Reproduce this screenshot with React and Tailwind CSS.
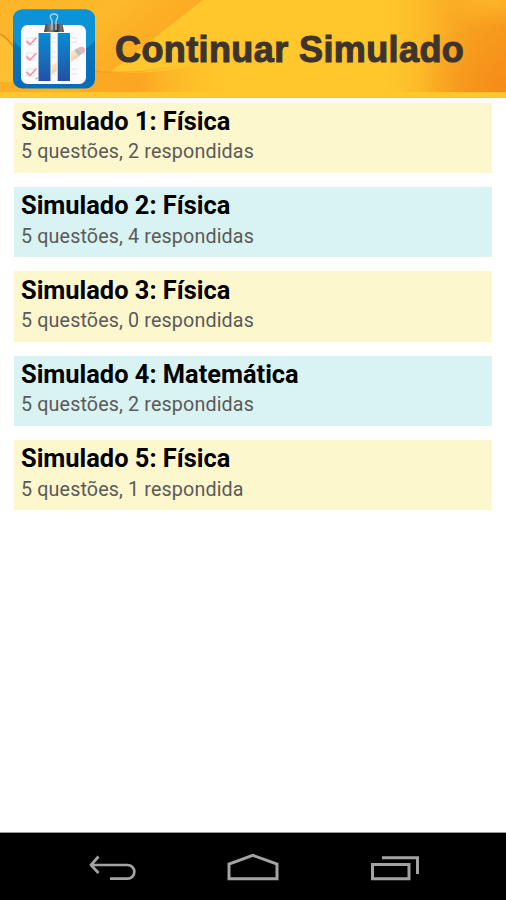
import React from 'react';

const simulados = [
  { id: 1, materia: 'Física', status: '5 questões, 2 respondidas' },
  { id: 2, materia: 'Física', status: '5 questões, 4 respondidas' },
  { id: 3, materia: 'Física', status: '5 questões, 0 respondidas' },
  { id: 4, materia: 'Matemática', status: '5 questões, 2 respondidas' },
  { id: 5, materia: 'Física', status: '5 questões, 1 respondida' },
];

function HeaderArt() {
  return (
    <svg className="absolute inset-0" width="506" height="98" viewBox="0 0 506 98">
      <defs>
        <linearGradient id="left" gradientUnits="userSpaceOnUse" x1="70" y1="-10" x2="150" y2="80">
          <stop offset="0" stopColor="#fdb62a" />
          <stop offset="0.35" stopColor="#fdb82b" />
          <stop offset="0.65" stopColor="#fcae25" />
          <stop offset="1" stopColor="#fbaa23" />
        </linearGradient>
        <linearGradient id="right" x1="0" y1="0" x2="1" y2="0">
          <stop offset="0" stopColor="#ffc72b" />
          <stop offset="0.25" stopColor="#fdbd29" />
          <stop offset="0.6" stopColor="#f8a722" />
          <stop offset="1" stopColor="#f69c1e" />
        </linearGradient>
        <linearGradient id="wave" gradientUnits="userSpaceOnUse" x1="60" y1="0" x2="240" y2="0">
          <stop offset="0" stopColor="#fba923" />
          <stop offset="0.45" stopColor="#fba723" />
          <stop offset="1" stopColor="#ffc72b" stopOpacity="0" />
        </linearGradient>
        <linearGradient id="line" gradientUnits="userSpaceOnUse" x1="90" y1="0" x2="200" y2="0">
          <stop offset="0" stopColor="#f3931b" stopOpacity="0.8" />
          <stop offset="1" stopColor="#f9a522" stopOpacity="0" />
        </linearGradient>
        <radialGradient id="corner" cx="1" cy="1" r="0.9">
          <stop offset="0" stopColor="#f58516" stopOpacity="0.75" />
          <stop offset="1" stopColor="#f58516" stopOpacity="0" />
        </radialGradient>
        <radialGradient id="glow" cx="0.85" cy="0" r="0.8">
          <stop offset="0" stopColor="#ffba2c" stopOpacity="0.8" />
          <stop offset="1" stopColor="#ffba2c" stopOpacity="0" />
        </radialGradient>
      </defs>
      <rect width="506" height="98" fill="#ffc72b" />
      <path d="M0 0H203L100 80L84 92H0Z" fill="url(#left)" />
      <path d="M0 34Q14 44 30 68L44 86Q20 82 0 82Z" fill="#ffbf33" />
      <path d="M0 34Q8 38 16 50" fill="none" stroke="#d98716" strokeWidth="1.8" opacity="0.75" />
      <path d="M0 82Q24 81 50 92H0Z" fill="#fbae27" />
      <path d="M90 70Q125 76 170 70Q205 64 248 50V92H84L90 87Z" fill="url(#wave)" />
      <path d="M90 71Q135 76 200 62" fill="none" stroke="url(#line)" strokeWidth="1.5" />
      <rect x="386" width="120" height="92" fill="url(#right)" />
      <rect x="406" width="100" height="92" fill="url(#corner)" />
      <rect x="426" width="80" height="34" fill="url(#glow)" />
      <rect y="92" width="506" height="6" fill="#ffc72b" />
    </svg>
  );
}

function AppLogo() {
  return (
    <svg className="relative shrink-0" width="84" height="82" viewBox="12 8 84 82">
      <defs>
        <linearGradient id="tile" x1="0" y1="0" x2="0" y2="1">
          <stop offset="0" stopColor="#0b95d9" />
          <stop offset="0.5" stopColor="#0874bc" />
          <stop offset="1" stopColor="#086bb5" />
        </linearGradient>
        <linearGradient id="bar" x1="0" y1="0" x2="0" y2="1">
          <stop offset="0" stopColor="#078bd2" />
          <stop offset="0.5" stopColor="#1670bd" />
          <stop offset="1" stopColor="#2350a5" />
        </linearGradient>
        <linearGradient id="clip" x1="0" y1="0" x2="1" y2="0">
          <stop offset="0" stopColor="#444" />
          <stop offset="0.35" stopColor="#858585" />
          <stop offset="0.65" stopColor="#333" />
          <stop offset="0.85" stopColor="#777" />
          <stop offset="1" stopColor="#444" />
        </linearGradient>
      </defs>
      <rect x="13" y="9.5" width="82" height="79" rx="9" fill="url(#tile)" />
      <path d="M13 18.5A9 9 0 0 1 22 9.5H86A9 9 0 0 1 95 18.5V40Q89 48 80 52H28Q19 48 13 40Z" fill="#0b92d7" />
      <rect x="21" y="25" width="65" height="59" rx="6.5" fill="#fafaff" />
      <path d="M38 38H77M38 42H77M38 52H74M38 57H77M38 69H77M38 74H77" stroke="#e4e5ed" strokeWidth="1" />
      <path d="M27 38H34V45H27ZM27 53H34V60H27ZM27 69H34V76H27Z" fill="none" stroke="#dadae2" strokeWidth="0.7" />
      <path
        d="M26.5 41L30 44.5L36.5 37.5M26.5 56.5L30 60L36.5 53M26.5 72L30 75.5L36.5 68.5"
        fill="none"
        stroke="#e9a0a4"
        strokeWidth="1.8"
      />
      <path d="M35 79.5L43 71.5L76 49L80 55L46 77Z" fill="#fae0bf" />
      <path d="M44 76L78 53.5L80 56L46 78Z" fill="#f3d3b0" />
      <path d="M74.5 50L78 48L82 54L78.5 56Z" fill="#b9bdcc" />
      <path d="M78 48Q83 45 85 49Q86 52 82 54Z" fill="#efb3b4" />
      <path d="M35 79.5L38.5 76L41 78Z" fill="#a99996" />
      <rect x="37.5" y="32" width="14" height="50" fill="#fff" />
      <rect x="56.7" y="32" width="14.3" height="50" fill="#fff" />
      <rect x="38.5" y="33" width="12" height="48" fill="url(#bar)" />
      <rect x="57.7" y="33" width="12.3" height="48" fill="url(#bar)" />
      <path d="M45.5 24H62.5L64 32H44Z" fill="url(#clip)" />
      <path d="M52 30V21L50.3 17Q50.3 14 54 14T57.7 17L56 21V30" fill="none" stroke="#b4d4e6" strokeWidth="1.3" />
    </svg>
  );
}

function SimuladoCard({ item, index }) {
  return (
    <li className={`flex h-[70.4px] flex-col px-[7px] ${index % 2 === 0 ? 'bg-[#fdf7cd]' : 'bg-[#d9f3f3]'}`}>
      <h2 className="mt-[2.4px] text-[25.4px] leading-[32px] font-bold text-black">
        Simulado {item.id}: {item.materia}
      </h2>
      <p className="mt-[1.4px] text-[19.7px] leading-[28px] tracking-[0.14px] text-[#5a5a5a]">{item.status}</p>
    </li>
  );
}

function NavBar() {
  return (
    <nav className="h-[68px] shrink-0 border-t border-[#999] bg-black">
      <div className="flex h-full items-center justify-between pr-[86px] pl-[88px]">
        <button aria-label="Voltar">
          <svg width="50" height="30" viewBox="88 852 50 30" fill="none" stroke="#a3a3a3" strokeWidth="2.7">
            <path d="M98.5 856.5L91 865L98.5 873M91 865H127.5A6.8 6.8 0 0 1 127.5 878.7H110" />
          </svg>
        </button>
        <button aria-label="Início">
          <svg width="54" height="30" viewBox="227 852 54 30" fill="none" stroke="#a3a3a3" strokeWidth="3">
            <path d="M229 878.8V864L252.8 855.3L277 864V878.8Z" />
          </svg>
        </button>
        <button aria-label="Recentes">
          <svg width="50" height="30" viewBox="370 852 50 30" fill="none" stroke="#a3a3a3" strokeWidth="3">
            <path d="M372.5 864.5H409V878.8H372.5ZM382 857.7H417.5V874" />
          </svg>
        </button>
      </div>
    </nav>
  );
}

export default function App() {
  return (
    <div className="flex h-[900px] w-[506px] flex-col overflow-hidden bg-white font-[Roboto,sans-serif]">
      <header className="relative flex h-[98px] shrink-0 items-start pt-2 pl-3">
        <HeaderArt />
        <AppLogo />
        <h1 className="relative mt-[21px] ml-[19px] font-['Liberation_Sans',Arial,sans-serif] text-[36px] leading-[42px] font-bold tracking-[0.4px] whitespace-nowrap text-[#3d352d] [-webkit-text-stroke:1.1px_#3d352d]">
          Continuar Simulado
        </h1>
      </header>

      <main className="flex-1 px-[14px] pt-[4.5px]">
        <ul className="flex flex-col gap-[14px]">
          {simulados.map((item, index) => (
            <SimuladoCard key={item.id} item={item} index={index} />
          ))}
        </ul>
      </main>

      <NavBar />
    </div>
  );
}
